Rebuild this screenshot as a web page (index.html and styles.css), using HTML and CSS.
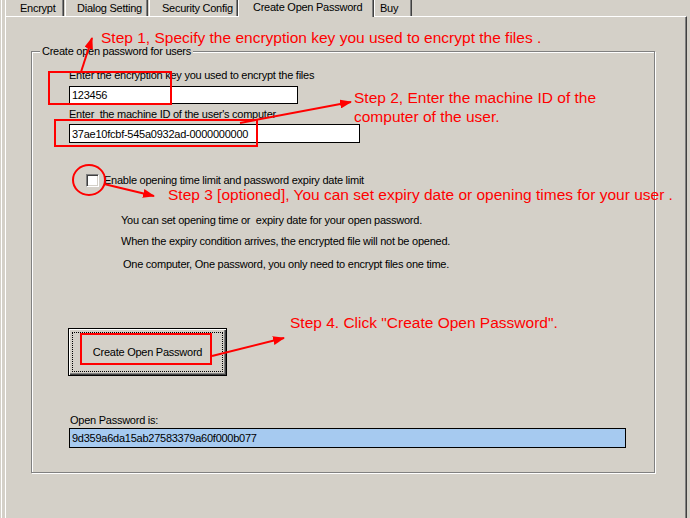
FILE: index.html
```html
<!DOCTYPE html>
<html lang="en">

<head>
    <meta charset="UTF-8">
    <title>Create Open Password</title>
    <link rel="stylesheet" href="styles.css">
</head>

<body>

    <div class="app">
        <div class="tabs">
            <div class="tab tab-encrypt">Encrypt</div>
            <div class="tab tab-dialog">Dialog Setting</div>
            <div class="tab tab-security">Security Config</div>
            <div class="tab tab-active">Create Open Password</div>
            <div class="tab tab-buy">Buy</div>
        </div>

        <div class="page">
            <div class="group">
                <div class="group-title">Create open password for users</div>

                <label class="field-label" for="key">Enter the encryption key you used to encrypt the files</label>
                <input class="edit edit-key" type="text" id="key" value="123456">

                <label class="field-label field-label-id" for="machine">Enter&nbsp; the machine ID of the user's computer</label>
                <input class="edit edit-id" type="text" id="machine" value="37ae10fcbf-545a0932ad-0000000000">

                <label class="check-row">
                    <input class="check" type="checkbox">
                    <span>Enable opening time limit and password expiry date limit</span>
                </label>

                <p class="info info-first">You can set opening time or&nbsp; expiry date for your open password.</p>
                <p class="info">When the expiry condition arrives, the encrypted file will not be opened.</p>
                <p class="info info-last">One computer, One password, you only need to encrypt files one time.</p>

                <button class="btn" type="button">Create Open Password</button>

                <label class="field-label result-label" for="result">Open Password is:</label>
                <input class="edit edit-result" type="text" id="result" value="9d359a6da15ab27583379a60f000b077">
            </div>
        </div>

        <!-- red help marks drawn over the dialog -->
        <svg class="marks" width="690" height="518" viewBox="0 0 690 518">
            <defs>
                <marker id="head" markerWidth="12" markerHeight="9" refX="11" refY="4.5" orient="auto" markerUnits="userSpaceOnUse">
                    <path d="M0 0 L12 4.5 L0 9 Z" fill="#f00"/>
                </marker>
            </defs>
            <g fill="none" stroke="#f00" stroke-width="2">
                <rect x="49" y="72" width="122" height="32"/>
                <rect x="55" y="120" width="202" height="26"/>
                <rect x="81" y="334" width="130" height="30"/>
                <ellipse cx="89" cy="180" rx="16" ry="15"/>
                <line x1="81" y1="72" x2="92" y2="38" marker-end="url(#head)"/>
                <line x1="240" y1="123" x2="351" y2="102" marker-end="url(#head)"/>
                <line x1="104" y1="184" x2="154" y2="196" marker-end="url(#head)"/>
                <line x1="212" y1="356" x2="284" y2="338" marker-end="url(#head)"/>
            </g>
        </svg>

        <div class="note note-1">Step 1, Specify the encryption key you used to encrypt the files .</div>
        <div class="note note-2">Step 2, Enter the machine ID of the<br>computer of the user.</div>
        <div class="note note-3">Step 3 [optioned], You can set expiry date or opening times for your user .</div>
        <div class="note note-4">Step 4. Click "Create Open Password".</div>
    </div>

</body>

</html>
```

FILE: styles.css
```css
* {
    box-sizing: border-box;
}

body {
    margin: 0;
    font-family: "Liberation Sans", Arial, sans-serif;
    font-size: 11px;
    letter-spacing: -0.25px;
    color: #000;
    background-color: #d4d0c8;
}

.app {
    position: relative;
    width: 690px;
    height: 518px;
    overflow: hidden;
    padding-left: 5px;
    background-color: #d4d0c8;
    box-shadow: inset 1px 0 0 #d4d0c8, inset 2px 0 0 #fff;
}

/* tab strip */
.tabs {
    display: flex;
    height: 16px;
}

.tab {
    height: 16px;
    line-height: 16px;
    border-left: 1px solid #fff;
    border-right: 1px solid #404040;
    box-shadow: inset -1px 0 0 #808080;
    margin-right: 1px;
    white-space: nowrap;
}

.tab-encrypt {
    width: 59px;
    padding-left: 14px;
}

.tab-dialog {
    width: 83px;
    padding-left: 11px;
}

.tab-security {
    width: 89px;
    padding-left: 12px;
    margin-right: 0;
}

.tab-active {
    position: relative;
    z-index: 1;
    width: 136px;
    height: 17px;
    line-height: 14px;
    padding-left: 14px;
    margin-right: 0;
    background-color: #d4d0c8;
}

.tab-buy {
    width: 38px;
    padding-left: 5px;
}

/* tab page */
.page {
    width: 682px;
    height: 502px;
    border-top: 1px solid #fff;
    border-left: 1px solid #fff;
    border-right: 1px solid #404040;
    box-shadow: inset -1px 0 0 #808080;
}

.group {
    width: 624px;
    height: 422px;
    margin: 34px 0 0 25px;
    padding-left: 37px;
    border: 1px solid #808080;
    box-shadow: inset 1px 1px 0 #fff, 1px 1px 0 #fff;
}

.group-title {
    width: max-content;
    margin: -6px 0 0 -29px;
    padding: 0 2px;
    line-height: 11px;
    background-color: #d4d0c8;
}

.field-label {
    display: block;
    line-height: 13px;
    margin-top: 12px;
}

.field-label-id {
    margin-top: 4px;
}

.edit {
    display: block;
    height: 18px;
    padding: 0 2px;
    border: 1px solid #000;
    background-color: #fff;
    font: inherit;
    letter-spacing: inherit;
    color: #000;
    outline: none;
}

.edit-key {
    width: 229px;
    margin-top: 4px;
}

.edit-id {
    width: 291px;
    height: 19px;
    margin-top: 3px;
}

.check-row {
    display: flex;
    align-items: center;
    gap: 5px;
    height: 13px;
    margin: 31px 0 0 17px;
    line-height: 13px;
}

.check {
    appearance: none;
    width: 13px;
    height: 13px;
    margin: 0;
    background-color: #fff;
    border: 1px solid;
    border-color: #808080 #fff #fff #808080;
    box-shadow: inset 1px 1px 0 #404040, inset -1px -1px 0 #d4d0c8;
}

.info {
    margin: 8px 0 0 52px;
    line-height: 13px;
}

.info-first {
    margin-top: 27px;
}

.info-last {
    margin-top: 10px;
    margin-left: 54px;
}

.btn {
    display: block;
    width: 159px;
    height: 48px;
    margin: 57px 0 0 -1px;
    padding: 0;
    background-color: #d4d0c8;
    border: 1px solid #000;
    box-shadow: inset 1px 1px 0 #fff, inset -1px -1px 0 #404040, inset -2px -2px 0 #808080;
    outline: 1px dotted #000;
    outline-offset: -5px;
    font: inherit;
    letter-spacing: inherit;
    color: #000;
}

.result-label {
    margin: 38px 0 0 1px;
}

.edit-result {
    width: 557px;
    height: 20px;
    margin-top: 1px;
    background-color: #a6caf0;
}

/* annotations */
.marks {
    position: absolute;
    left: 0;
    top: 0;
    pointer-events: none;
}

.note {
    position: absolute;
    color: #f00;
    font-size: 15.5px;
    line-height: 15px;
    letter-spacing: 0;
    white-space: nowrap;
}

.note-1 {
    left: 101px;
    top: 30px;
}

.note-2 {
    left: 354px;
    top: 88px;
    line-height: 19px;
}

.note-3 {
    left: 168px;
    top: 187px;
}

.note-4 {
    left: 290px;
    top: 315px;
}
```
